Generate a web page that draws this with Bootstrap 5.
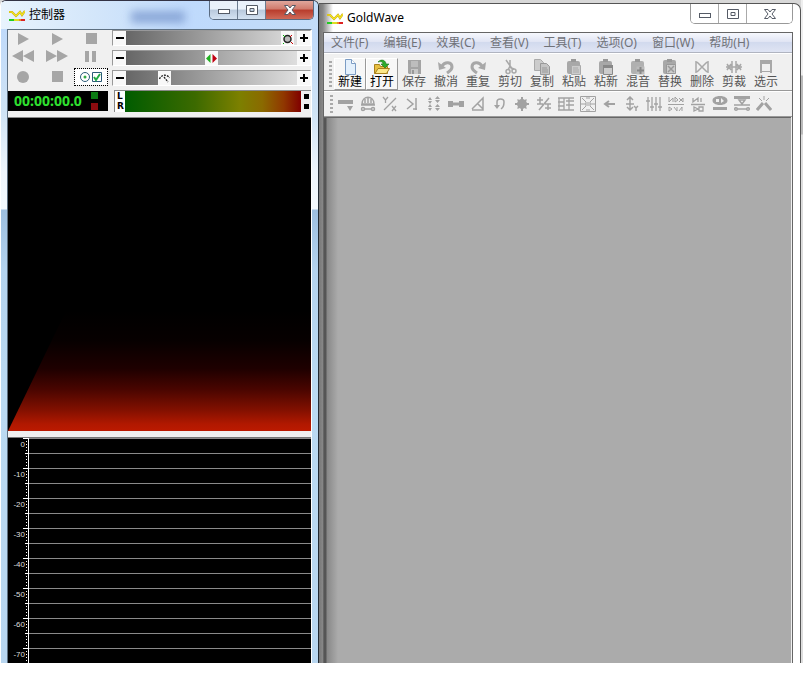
<!DOCTYPE html>
<html lang="zh-CN">
<head>
<meta charset="utf-8">
<meta name="viewport" content="width=device-width, initial-scale=1">
<title>GoldWave</title>
<link href="https://cdn.jsdelivr.net/npm/bootstrap@5.3.0/dist/css/bootstrap.min.css" rel="stylesheet">
<style>
body { font: 12px/16px "Noto Sans", "Noto Sans CJK SC", sans-serif; color: #000; background: #fff; }
button { border: 0; padding: 0; background: none; color: inherit; }
svg { display: block; }
.gw-desk { height: calc(100vh - 26px); min-height: 480px; overflow: hidden; background: #d8d8d8; }
/* controller window */
.gw-ctl { flex: 0 0 319px; border-left: 1px solid #fff; border-right: 1px solid #222a33; border-top: 1px solid #334; border-radius: 6px 6px 0 0;
  background: linear-gradient(#cfe3f8 0, #c0dafa 28px, #cfe3f5 110px, #eef5fc 170px, #f4f9fd 208px, #9dbfe0 209px, #b4d3ee 270px, #bbdaf2 400px, #b8d6f0); }
.gw-title { height: 28px; }
.gw-ctl .gw-title { background: linear-gradient(90deg, #e8f3fd, #d3e6fa 30%, #bfdafc 60%, #c3dcf8); border-radius: 5px 5px 0 0; }
.gw-name { font-size: 12px; }
.gw-smudge { width: 54px; height: 12px; margin-left: 66px; background: #7d9bd0; filter: blur(4px); opacity: .8; }
.gw-caps { height: 19px; border: 1px solid #5a6b80; border-top: 0; border-radius: 0 0 5px 5px; overflow: hidden; }
.gw-caps button { display: flex; align-items: center; justify-content: center; border-right: 1px solid #6b7b8f; background: linear-gradient(#eaf1fa 0 45%, #b9c9dc 50%, #d4e2f2); }
.gw-caps button:last-child { border-right: 0; }
.gw-caps .cap-s { width: 28px; }
.gw-caps .cap-l { width: 47px; }
.gw-caps .cap-red { background: linear-gradient(#e0a79c 0, #d07a6c 45%, #b83c2c 50%, #cf6a58); }
.gw-client { margin: 0 6px; border: 1px solid #5d6f80; border-right-color: #fff; border-bottom: 0; background: #f0f0f0; min-height: 0; }
.gw-transport { display: grid; grid-template-columns: repeat(3, 34px); grid-template-rows: 17px 18px 23px; color: #a6a6a6; margin-left: -2px; }
.gw-transport button { display: flex; align-items: center; justify-content: center; }
.gw-transport .gw-props { width: 32px; height: 16px; background: #fff; outline: 1px dotted #000; justify-self: center; align-self: center; }
.gw-slide { height: 16px; border: 1px solid #999; border-right-color: #fff; border-bottom-color: #fff; background: #f8f8f8; }
.gw-slide button { flex: 0 0 13px; display: flex; align-items: center; justify-content: center; }
.gw-slide input { appearance: none; min-width: 0; height: 14px; margin: 0; background: linear-gradient(90deg, #666, #dedede); }
.gw-slide input::-webkit-slider-thumb { appearance: none; width: 13px; height: 14px; border: 0; border-radius: 0; background: #f8f8f8 center no-repeat; }
#vol::-webkit-slider-thumb { background-image: url("data:image/svg+xml,%3Csvg xmlns='http://www.w3.org/2000/svg' width='13' height='13'%3E%3Ccircle cx='6.500' cy='7' r='3.500' fill='%23bbb' stroke='%23222' stroke-width='1.500'/%3E%3Cpath d='M2 3l2 2M3 11l-1 1' stroke='%230a0' /%3E%3Cpath d='M11 3l-2 2M10 10l2 2' stroke='%23c00'/%3E%3C/svg%3E"); }
#bal::-webkit-slider-thumb { background-image: url("data:image/svg+xml,%3Csvg xmlns='http://www.w3.org/2000/svg' width='13' height='13'%3E%3Cpath d='M5.500 2v9L1 6.500z' fill='%2322b022'/%3E%3Cpath d='M7.500 2v9L12 6.500z' fill='%23c00010'/%3E%3C/svg%3E"); }
#spd::-webkit-slider-thumb { background-image: url("data:image/svg+xml,%3Csvg xmlns='http://www.w3.org/2000/svg' width='13' height='13'%3E%3Cpath d='M1.500 7A5.500 5.500 0 0 1 11.500 6M6 5l4 5' fill='none' stroke='%23222' stroke-width='1.300' stroke-dasharray='2 1'/%3E%3C/svg%3E"); }
.gw-led { flex: 0 0 100px; height: 20px; background: #000; color: #2fe02f; font: bold 14px/20px "Noto Sans", sans-serif; padding: 0 10px 0 6px; }
.gw-led i { display: block; width: 7px; height: 7px; background: #0c7a14; }
.gw-led i + i { background: #8c0c10; }
.gw-lr { flex: 0 0 10px; font: bold 9px/10px "DejaVu Sans", sans-serif; padding-left: 2px; background: #fff; }
.gw-meter { height: 22px; border: 1px solid #888; border-right: 0; border-bottom: 0; margin-left: 6px; }
.gw-bar { background: linear-gradient(90deg, #005c00, #3c6a00 40%, #7c8000 65%, #8a6a00 78%, #903800 90%, #800000); }
.gw-clip { flex: 0 0 10px; }
.gw-clip i { width: 5px; height: 5px; background: #000; }
.gw-spec { flex: 0 0 314px; margin-top: 5px; background: #000; border-top: 1px solid #888; }
.gw-glow { height: 120px; clip-path: polygon(58px 0, 100% 0, 100% 100%, 0 100%); background: linear-gradient(#000, #070000 25%, #1e0000 48%, #480500 65%, #801000 82%, #b01800 94%, #bc1a00); }
.gw-scale { margin-top: 6px; color: #ddd; overflow: hidden;
  background: repeating-linear-gradient(#8a8a8a 0 1px, transparent 1px 15px) 21px 0 / 100% 100% no-repeat, #000; border-top: 1px solid #777; }
.gw-axis { flex: 0 0 21px; border-right: 1px solid #fff;
  background: repeating-linear-gradient(#fff 0 1px, transparent 1px 3px) 18px 0 / 1px 100% no-repeat,
  repeating-linear-gradient(#fff 0 1px, transparent 1px 15px) 17px 0 / 3px 100% no-repeat,
  repeating-linear-gradient(#fff 0 1px, transparent 1px 30px) 15px 0 / 5px 100% no-repeat; }
.gw-axis span { display: block; height: 30px; font: 8px/13px "Liberation Sans", sans-serif; text-align: right; padding-right: 3px; }
/* editor window */
.gw-main { margin-top: 3px; min-width: 0; background: linear-gradient(90deg, #777, #888 4px, #fff 14px); border-top: 1px solid #555; border-right: 1px solid #555; border-radius: 0 7px 0 0; padding: 0 7px 0 4px; }
.gw-main .gw-caps { height: 20px; border-color: #999; }
.gw-main .gw-caps button { background: #fff; border-color: #aaa; }
.gw-main .gw-caps .cap-l { width: 45px; }
.gw-body { border: 1px solid #666; border-bottom: 0; min-height: 0; background: #f0f0f0; }
.gw-menu { height: 20px; background: linear-gradient(#f6f8fd, #e1e5f4 45%, #d2daee 50%, #dfe4f3); border-bottom: 1px solid #b0b4c0; padding-left: 7px; gap: 15px; }
.gw-menu a { color: #707278; text-decoration: none; line-height: 19px; white-space: nowrap; }
.gw-tools { border-top: 1px solid #fff; border-bottom: 1px solid #999; padding-left: 5px; overflow: hidden; color: #a2a2a2; }
.gw-tools::before { content: ""; flex: none; width: 3px; margin: 3px 2px 3px 0; background: repeating-linear-gradient(#aaa 0 2px, transparent 2px 4px); }
.gw-tools button { flex: none; display: flex; flex-direction: column; align-items: center; }
.gw-big button { width: 32px; height: 32px; color: #a8a8a8; border: 1px solid transparent; }
.gw-big span { color: #555; line-height: 14px; white-space: nowrap; }
.gw-big .gw-on { border-color: #fff #999 #999 #fff; background: #f7f7f7; }
.gw-big .gw-on span { color: #000; }
.gw-small { padding-left: 6px; }
.gw-small button { width: 22px; height: 24px; justify-content: center; }
.gw-canvas { margin-right: 1px; border-top: 1px solid #666; background: linear-gradient(90deg, #555 0 2px, #888 3px, #ababab 14px); }
.gw-back { flex: 0 0 2px; background: linear-gradient(#eee 75px, #bbb 76px 134px, #ddd 135px); }
</style>
<script src="https://cdn.jsdelivr.net/npm/bootstrap@5.3.0/dist/js/bootstrap.bundle.min.js"></script>
</head>
<body>
<svg width="0" height="0" class="position-absolute" aria-hidden="true">
<symbol id="logo" viewBox="0 0 16 14"><path d="M0 4h3l4 4 4-4 2 3 3-4" fill="none" stroke="#c8a818" stroke-width="2.200"/><path d="M0 4h3l4 4 4-4 2 3 3-4" fill="none" stroke="#f4e820" stroke-width="1.200"/><path d="M0 11h5v2H0z" fill="#2c2"/><path d="M5 11h5v2H5z" fill="#dd2"/><path d="M10 11h2v2h-2z" fill="#e82"/><path d="M12 11h4v2h-4z" fill="#d22"/></symbol>
<symbol id="cmin" viewBox="0 0 14 12"><rect x="1.500" y="5.500" width="11" height="4" fill="#fff" stroke="#555b66"/></symbol>
<symbol id="cmax" viewBox="0 0 14 12"><path d="M1.500 1.500h11v9h-11zM5 4.500h4v3H5z" fill="#fff" fill-rule="evenodd" stroke="#555b66"/></symbol>
<symbol id="cx" viewBox="0 0 14 12"><path d="M1.500 1.500h3.500l2 2.500 2-2.500h3.500L9 6l3.500 4.500H9L7 8l-2 2.500H1.500L5 6z" fill="#fff" stroke="#555b66"/></symbol>
</svg>
<main class="gw-desk d-flex">
<section class="gw-ctl d-flex flex-column" aria-label="控制器">
  <header class="gw-title d-flex flex-shrink-0 align-items-center ps-2">
    <svg width="16" height="14" class="ms-n1"><use href="#logo"/></svg><span class="gw-name ms-1">控制器</span><div class="gw-smudge mt-1"></div>
    <div class="gw-caps d-flex ms-auto me-1 align-self-start"><button class="cap-s" aria-label="最小化"><svg width="14" height="12"><use href="#cmin"/></svg></button><button class="cap-s" aria-label="最大化"><svg width="14" height="12"><use href="#cmax"/></svg></button><button class="cap-l cap-red" aria-label="关闭"><svg width="14" height="12"><use href="#cx"/></svg></button></div>
  </header>
  <div class="gw-client d-flex flex-column flex-grow-1">
    <div class="d-flex">
      <div class="gw-transport flex-shrink-0">
        <button aria-label="播放"><svg width="14" height="12" fill="currentColor"><path d="M2 0l11 6L2 12z"/></svg></button>
        <button aria-label="播放选区"><svg width="14" height="12" fill="currentColor"><path d="M2 0l11 6L2 12z"/></svg></button>
        <button aria-label="停止"><svg width="11" height="11" fill="currentColor"><path d="M0 0h11v11H0z"/></svg></button>
        <button aria-label="倒放"><svg width="22" height="12" fill="currentColor"><path d="M11 0v12L0 6zM22 0v12L11 6z"/></svg></button>
        <button aria-label="快进"><svg width="22" height="12" fill="currentColor"><path d="M0 0v12l11-6zM11 0v12l11-6z"/></svg></button>
        <button aria-label="暂停"><svg width="12" height="11" fill="currentColor"><path d="M0 0h4v11H0zM7 0h4v11H7z"/></svg></button>
        <button aria-label="录音"><svg width="12" height="12" fill="currentColor"><circle cx="6" cy="6" r="6"/></svg></button>
        <button aria-label="停止录音"><svg width="11" height="11" fill="currentColor"><path d="M0 0h11v11H0z"/></svg></button>
        <button class="gw-props" aria-label="属性"><svg width="24" height="12" fill="none" stroke="#2c5c78"><circle cx="6" cy="6" r="4.500"/><circle cx="6" cy="6" r="1.500" fill="#3a4" stroke="none"/><path d="M13.500 1.500h9v9h-9z"/><path d="M15 6l2 3 4-6" stroke="#2a4" stroke-width="2"/></svg></button>
      </div>
      <div class="d-flex flex-column flex-grow-1 ms-1">
        <div class="gw-slide d-flex mb-1"><button aria-label="降低音量"><svg width="8" height="2"><path d="M0 0h8v2H0z"/></svg></button><input class="flex-grow-1" id="vol" type="range" value="98" aria-label="音量"><button aria-label="提高音量"><svg width="8" height="8"><path d="M0 3h8v2H0zM3 0h2v8H3z"/></svg></button></div>
        <div class="gw-slide d-flex mb-1"><button aria-label="左"><svg width="8" height="2"><path d="M0 0h8v2H0z"/></svg></button><input class="flex-grow-1" id="bal" type="range" value="50" aria-label="平衡"><button aria-label="右"><svg width="8" height="8"><path d="M0 3h8v2H0zM3 0h2v8H3z"/></svg></button></div>
        <div class="gw-slide d-flex mb-1"><button aria-label="减速"><svg width="8" height="2"><path d="M0 0h8v2H0z"/></svg></button><input class="flex-grow-1" id="spd" type="range" value="20" aria-label="速度"><button aria-label="加速"><svg width="8" height="8"><path d="M0 3h8v2H0zM3 0h2v8H3z"/></svg></button></div>
      </div>
    </div>
    <div class="d-flex align-items-center">
      <div class="gw-led d-flex align-items-center justify-content-between"><span>00:00:00.0</span><span><i class="mb-1"></i><i></i></span></div>
      <div class="gw-meter d-flex flex-grow-1"><div class="gw-lr">L<br>R</div><div class="gw-bar flex-grow-1"></div><div class="gw-clip d-flex flex-column align-items-center justify-content-around"><i></i><i></i></div></div>
    </div>
    <div class="gw-spec d-flex flex-column justify-content-end"><div class="gw-glow"></div></div>
    <div class="gw-scale d-flex flex-grow-1"><div class="gw-axis"><span>0</span><span>-10</span><span>-20</span><span>-30</span><span>-40</span><span>-50</span><span>-60</span><span>-70</span></div></div>
  </div>
</section>
<section class="gw-main d-flex flex-column flex-grow-1" aria-label="GoldWave">
  <header class="gw-title d-flex flex-shrink-0 align-items-center">
    <svg width="16" height="14" class="ms-1"><use href="#logo"/></svg><span class="gw-name ms-1">GoldWave</span>
    <div class="gw-caps d-flex ms-auto align-self-start"><button class="cap-s" aria-label="最小化"><svg width="14" height="12"><use href="#cmin"/></svg></button><button class="cap-s" aria-label="最大化"><svg width="14" height="12"><use href="#cmax"/></svg></button><button class="cap-l" aria-label="关闭"><svg width="14" height="12"><use href="#cx"/></svg></button></div>
  </header>
  <div class="gw-body d-flex flex-column flex-grow-1">
    <nav class="gw-menu d-flex flex-shrink-0 overflow-hidden"><a href="#">文件(F)</a><a href="#">编辑(E)</a><a href="#">效果(C)</a><a href="#">查看(V)</a><a href="#">工具(T)</a><a href="#">选项(O)</a><a href="#">窗口(W)</a><a href="#">帮助(H)</a></nav>
    <div class="gw-tools gw-big d-flex flex-shrink-0 pt-1">
      <button class="gw-on"><svg width="16" height="16"><path d="M3.500.5h6l4 4v11h-10z" fill="#e4f0fc" stroke="#7c9cc4"/><path d="M9.500.5v4h4" fill="#fff" stroke="#7c9cc4"/></svg><span>新建</span></button>
      <button class="gw-on"><svg width="16" height="16"><path d="M.5 14.500v-9h5l1 2h7v7z" fill="#e8c040" stroke="#a8801c"/><path d="M1 14.500l3-5h11.500l-3 5z" fill="#fce888" stroke="#a8801c"/><path d="M4 3c4-4 8-1 8 2h3l-4 4-4-4h2c0-2-2-3-5-2z" fill="#2cac2c" stroke="#187018" stroke-width=".600"/></svg><span>打开</span></button>
      <button><svg width="16" height="16"><path d="M2 1h13v14H3l-1-1z" fill="#a4a4a4"/><path d="M5 2h7v6H5z" fill="#bdbdbd"/><path d="M5 10h7v5H5z" fill="#c8c8c8"/><path d="M6 11h2v4H6z" fill="#999"/></svg><span>保存</span></button>
      <button><svg width="16" height="16" fill="none" stroke="currentColor" stroke-width="3"><path d="M4 7c3-5 10-4 10 1 0 3-2 4-5 6"/><path d="M0 3l1 8 7-2z" fill="currentColor" stroke="none"/></svg><span>撤消</span></button>
      <button><svg width="16" height="16" fill="none" stroke="currentColor" stroke-width="3"><path d="M12 7C9 2 2 3 2 8c0 3 2 4 5 6"/><path d="M16 3l-1 8-7-2z" fill="currentColor" stroke="none"/></svg><span>重复</span></button>
      <button><svg width="16" height="16" fill="none" stroke="currentColor" stroke-width="1.500"><path d="M4 1l7 10M8 1v6l-2 4M7 8l5 2"/><circle cx="6" cy="12.500" r="2"/><circle cx="12" cy="12" r="2"/></svg><span>剪切</span></button>
      <button><svg width="16" height="16"><path d="M.5.500h6l3 3v8h-9z" fill="#ccc" stroke="#aaa"/><path d="M6.500 4.500h6l3 3v8h-9z" fill="#c4c4c4" stroke="#999"/><path d="M8 9h5M8 11h6M8 13h6" stroke="#999"/></svg><span>复制</span></button>
      <button><svg width="16" height="16"><rect x="1" y="2" width="13" height="13" rx="2" fill="#a8a8a8"/><path d="M5 0h5v3H5z" fill="#999"/><path d="M5.500 6.500h9v9h-9z" fill="#ccc" stroke="#aaa"/><path d="M7 9h5M7 11h6M7 13h6" stroke="#aaa"/></svg><span>粘贴</span></button>
      <button><svg width="16" height="16"><rect x="1" y="2" width="13" height="13" rx="2" fill="#a8a8a8"/><path d="M5 0h5v3H5z" fill="#999"/><path d="M5.500 6.500h9v9h-9z" fill="#ccc" stroke="#888"/><path d="M5 6h10v3H5z" fill="#888"/></svg><span>粘新</span></button>
      <button><svg width="16" height="16"><rect x="1" y="2" width="13" height="13" rx="2" fill="#b0b0b0"/><path d="M5 0h5v3H5z" fill="#999"/><path d="M6.500 7.500h8v8h-8z" fill="#bbb"/><path d="M10.500 8v7M7 11.500h7" stroke="#888" stroke-width="2"/></svg><span>混音</span></button>
      <button><svg width="16" height="16"><rect x="1" y="1" width="13" height="14" rx="2" fill="#a8a8a8"/><path d="M5 0h5v3H5z" fill="#999"/><path d="M4.500 5.500h9v9h-9z" fill="#ccc" stroke="#999"/><path d="M6 7l6 6M12 7l-6 6" stroke="#999" stroke-width="1.500"/></svg><span>替换</span></button>
      <button><svg width="16" height="16" fill="none" stroke="currentColor" stroke-width="1.500"><path d="M2 2v12M14 2v12M3 3l10 10M13 3L3 13"/></svg><span>删除</span></button>
      <button><svg width="16" height="16" fill="none" stroke="currentColor" stroke-width="1.500"><path d="M6 2v12M10 2v12M0 8h16M1 5l4 6M5 5l-4 6M11 5l4 6M15 5l-4 6"/></svg><span>剪裁</span></button>
      <button><svg width="16" height="16" fill="none" stroke="currentColor"><path d="M2 3h12" stroke-width="4"/><path d="M3 3v11M13 3v11" stroke-width="2"/><path d="M4 12.500h8"/></svg><span>选示</span></button>
    </div>
    <div class="gw-tools gw-small d-flex flex-shrink-0">
      <button aria-label="音量"><svg width="16" height="16" fill="currentColor"><path d="M0 4h15v4H0zM9 10h6l-3 5z"/></svg></button>
      <button aria-label="多普勒"><svg width="16" height="16" fill="none" stroke="currentColor" stroke-width="1.500"><path d="M2 8c0-9 12-9 12 0zM5 7V3M8 7V1M11 7V3M1 9h14M4 13h8"/><circle cx="3" cy="13" r="1.500"/><circle cx="13" cy="13" r="1.500"/></svg></button>
      <button aria-label="表达式"><svg width="16" height="16" fill="none" stroke="currentColor" stroke-width="1.300"><path d="M1 1l2.500 3L6 1M3.500 4v3M14 2L2 14M10 10l4 5M14 10l-4 5"/></svg></button>
      <button aria-label="动态"><svg width="16" height="16" fill="none" stroke="currentColor" stroke-width="1.500"><path d="M3 3l6 5-6 5M12 2v12M9 13h4"/></svg></button>
      <button aria-label="回声"><svg width="16" height="16" fill="currentColor"><path d="M4 1l2 3H2zM4 8L2 5h4zM11.500 0l2.500 3H9zM11.500 7L9 4h5zM4 8l2 3H2zM4 15l-2-3h4zM11.500 8l2.500 3H9zM11.500 15L9 12h5z"/></svg></button>
      <button aria-label="压缩"><svg width="16" height="16" fill="currentColor"><path d="M0 5h5v2h6V5h5v6h-5V9H5v2H0z"/><path d="M5 6h6v4H5z" opacity=".500"/></svg></button>
      <button aria-label="淡入"><svg width="16" height="16" fill="none" stroke="currentColor" stroke-width="1.500"><path d="M2 13L13 2v12H2M8 8l5 5"/></svg></button>
      <button aria-label="反向"><svg width="16" height="16" fill="none" stroke="currentColor" stroke-width="1.500"><path d="M5 11V6c0-4 7-4 7 0 0 3 0 5-3 7"/><path d="M2 9l3 4 3-4z" fill="currentColor" stroke="none"/></svg></button>
      <button aria-label="机械化"><svg width="16" height="16" fill="currentColor"><circle cx="8" cy="8" r="5"/><path d="M7 1h2v14H7zM1 7h14v2H1zM3 4l1-1 9 9-1 1zM12 3l1 1-9 9-1-1z"/></svg></button>
      <button aria-label="偏移"><svg width="16" height="16" fill="none" stroke="currentColor" stroke-width="1.500"><path d="M4 1v7M1 4h6M1 8h6M13 2L3 14M12 8v6M9 8h6M9 12h6"/></svg></button>
      <button aria-label="音高"><svg width="16" height="16" fill="none" stroke="currentColor" stroke-width="1.300"><path d="M0 2h16M0 6h6M8 5h8M0 10h6M8 9h8M0 14h16M1 2v12M6 2v12M11 2v12"/></svg></button>
      <button aria-label="混响"><svg width="16" height="16" fill="none" stroke="currentColor"><path d="M.5.500h15v15H.5zM2 2l4 4M14 2l-4 4M2 14l4-4M14 14l-4-4M1 8h3M12 8h3M6 2h4M6 14h4"/><path d="M5 7h6v2H5z"/></svg></button>
      <button aria-label="时间"><svg width="16" height="16" fill="none" stroke="currentColor" stroke-width="2"><path d="M3 8h10M7 5L3 8l4 3"/></svg></button>
      <button aria-label="音量调整"><svg width="16" height="16" fill="none" stroke="currentColor" stroke-width="1.500"><path d="M6 1v13M2 8h8M3 4l3-3 3 3M3 11l3 3 3-3M10 10l2 2 2-2M12 12v3"/></svg></button>
      <button aria-label="均衡器"><svg width="16" height="16" fill="none" stroke="currentColor" stroke-width="1.300"><path d="M2 1v14M6 1v14M10 1v14M14 1v14M0 5h4M4 11h4M8 8h4M12 11h4"/></svg></button>
      <button aria-label="滤波"><svg width="16" height="16" fill="none" stroke="currentColor"><path d="M1 1v5l4-4v4M7 1v5l3-2zM11 2l4 4V2l-4 4M0 8.500h16M1 11v4l3-2zM6 11l3 4V11M11 15l3-4v4"/></svg></button>
      <button aria-label="降噪"><svg width="16" height="16" fill="none" stroke="currentColor"><path d="M3 2v4l5-4v4M11 2v4M1 8.500h14M4 11v4l4-2zM9 11v4h4v-4z" stroke-width="1.300"/></svg></button>
      <button aria-label="静音"><svg width="16" height="16" fill="currentColor"><path fill-rule="evenodd" d="M8 0c10 0 10 9 0 9S-2 0 8 0zM4 3v3h3V3zM9 2v5l3-2z"/><path d="M1 11h14v3H1z"/></svg></button>
      <button aria-label="平滑"><svg width="16" height="16" fill="none" stroke="currentColor" stroke-width="1.500"><path d="M0 1.500h16" stroke-width="3"/><path d="M5 4h6l-3 4zM0 9h16M3 13h10"/><circle cx="2" cy="13" r="1.300"/><circle cx="14" cy="13" r="1.300"/></svg></button>
      <button aria-label="爆音消除"><svg width="16" height="16" fill="none" stroke="currentColor"><path d="M7 7l-6 7M9 7l6 7" stroke-width="3"/><path d="M8 0v4M3 2l3 3M13 2l-3 3"/></svg></button>
    </div>
    <div class="gw-canvas flex-grow-1"></div>
  </div>
</section>
<div class="gw-back"></div>
</main>
</body>
</html>
